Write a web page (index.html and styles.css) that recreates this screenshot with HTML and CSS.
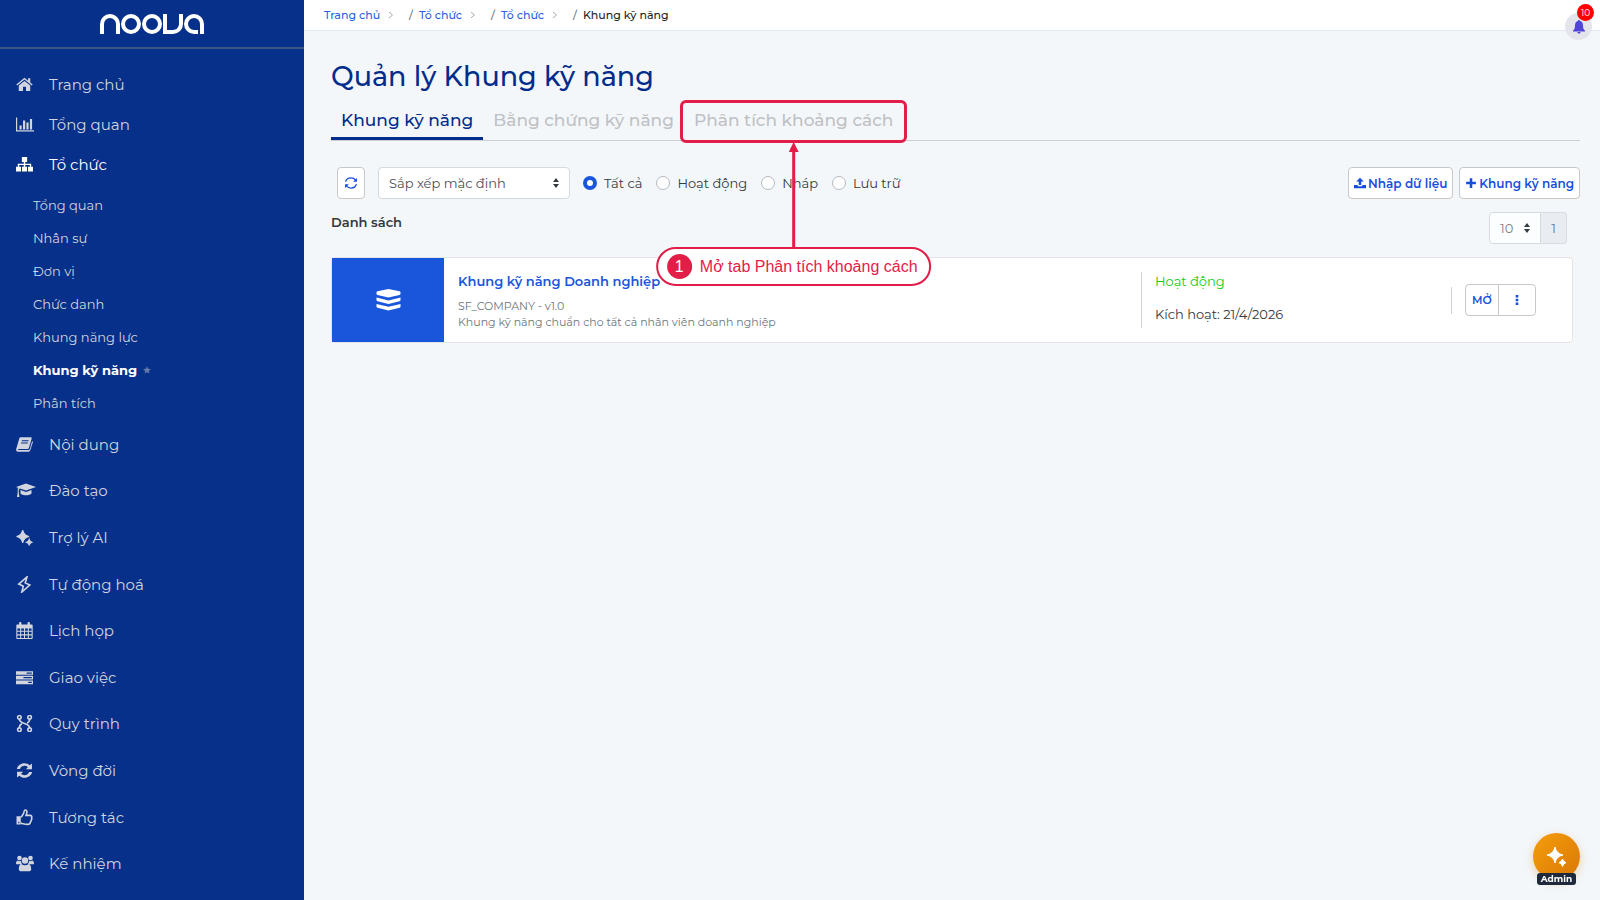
FILE: index.html
```
<!DOCTYPE html>
<html lang="vi">
<head>
  <meta charset="UTF-8">
  <meta name="viewport" content="width=device-width, initial-scale=1">
  <title>Quản lý Khung kỹ năng</title>
  <link rel="stylesheet" href="styles.css">
</head>
<body>

<aside class="sidebar">
  <a href="#" class="logo" aria-label="Noova">
    <span class="logo-n"></span><span class="logo-o"></span><span class="logo-o"></span><span class="logo-v"></span><span class="logo-a"></span>
  </a>

  <nav class="menu">
    <ul class="menu-top">
      <li><a href="#"><svg viewBox="0 0 16 16"><path d="M8 4.600 2.600 9v5.200h4v-4h2.800v4h4V9zM8 1.600.3 8l.9 1L8 3.400 14.800 9l.9-1-2.300-2V2.200h-2v2.200z"/></svg>Trang chủ</a></li>
      <li><a href="#"><svg class="wide" viewBox="0 0 18 16"><path d="M0 1h1.200v12.800H18V15H0zM3.500 9h2.200v4H3.500zM7 4h2.200v9H7zM10.400 6h2.200v7h-2.200zM13.900 2.600h2.200V13h-2.200z"/></svg>Tổng quan</a></li>
      <li><a href="#" class="open"><svg viewBox="0 0 16 16"><path d="M5.500 1h5v4.600H8.700v1.600h5.600V10H16v4.600h-4.700V10h1.700V8.500H8.700V10h1.700v4.600H5.600V10h1.700V8.500H3V10h1.700v4.600H0V10h1.700V7.200h5.600V5.600H5.500z"/></svg>Tổ chức</a></li>
    </ul>

    <ul class="submenu">
      <li><a href="#">Tổng quan</a></li>
      <li><a href="#">Nhân sự</a></li>
      <li><a href="#">Đơn vị</a></li>
      <li><a href="#">Chức danh</a></li>
      <li><a href="#">Khung năng lực</a></li>
      <li><a href="#" class="active">Khung kỹ năng<svg viewBox="0 0 16 16"><path d="m8 .5 2.300 5 5.400.6-4 3.700 1.100 5.400L8 12.500l-4.800 2.700 1.100-5.400-4-3.700 5.400-.6z"/></svg></a></li>
      <li><a href="#">Phân tích</a></li>
    </ul>

    <ul class="menu-main">
      <li><a href="#"><svg viewBox="0 0 16 16"><path fill-rule="evenodd" d="M4.700 1.200h9c.8 0 1.200.6 1 1.300l-2.600 8.700c-.2.600-.7 1-1.300 1H2.400c-.7 0-.6 1 .1 1h9.400c.5 0 .8-.2 1-.7l2.300-7.900c.6.400.8.9.6 1.500L13.400 13.500c-.2.800-.9 1.300-1.700 1.300H2C.7 14.800-.2 13.500.2 12.300L3 2.500c.2-.8.9-1.300 1.700-1.300zM5.600 4l-.3.900h6.400l.3-.9zM5 6.200l-.3.900h6.300l.3-.9z"/></svg>Nội dung</a></li>
      <li><a href="#"><svg class="cap" viewBox="0 0 20 16"><path d="M10 1 20 4.600 10 8 4 6 2.700 7.300V10l.8 4.400H1L1.700 10V6.300L2.500 5.400 0 4.600zM4.500 7.600 10 9.400l5.500-1.800V11c-1.500 2.400-9.500 2.400-11 0z"/></svg>Đào tạo</a></li>
      <li><a href="#"><svg viewBox="0 0 16 16"><path d="M6.300 1Q7.300 5.800 12.300 7 7.300 8 6.300 13 5.300 8 .5 7 5.300 5.800 6.300 1zM12.400 9.800q.6 2 2.600 2.600-2 .6-2.600 2.600-.6-2-2.600-2.600 2-.6 2.600-2.600z" stroke="currentColor"/></svg>Trợ lý AI</a></li>
      <li><a href="#"><svg viewBox="0 0 16 16"><path class="line" d="M10.400.8 2.600 7.600l4.300 2-1.500 5.600 7.600-6.700-4.300-2z"/></svg>Tự động hoá</a></li>
      <li><a href="#"><svg viewBox="0 0 16 16"><path fill-rule="evenodd" d="M1.300 2.400h1.600V1c0-1.200 2.200-1.200 2.200 0v1.400h5.800V1c0-1.200 2.200-1.200 2.200 0v1.400h1.600c.6 0 1 .4 1 1V15c0 .6-.4 1-1 1H1.300c-.6 0-1-.4-1-1V3.400c0-.6.4-1 1-1zM1.300 6v2.300h2.600V6zm3.600 0v2.300h2.600V6zm3.600 0v2.300h2.600V6zm3.600 0v2.300h2.600V6zM1.300 9.200v2.400h2.600V9.200zm3.600 0v2.400h2.600V9.200zm3.600 0v2.400h2.600V9.200zm3.600 0v2.400h2.600V9.200zM1.300 12.600V15h2.600v-2.400zm3.600 0V15h2.600v-2.400zm3.600 0V15h2.600v-2.400zm3.600 0V15h2.600v-2.400z"/></svg>Lịch họp</a></li>
      <li><a href="#"><svg viewBox="0 0 16 16"><path fill-rule="evenodd" d="M0 2h16v3.500H0zM10 3.200v1.200h4.900V3.200zM0 6.400h16v3.500H0zM7 7.600v1.200h7.900V7.600zM0 10.800h16v3.500H0zM11.500 12v1.200h3.400V12z"/></svg>Giao việc</a></li>
      <li><a href="#"><svg viewBox="0 0 16 16"><g class="line"><circle cx="3.200" cy="2.200" r="1.700"/><circle cx="12.800" cy="2.200" r="1.700"/><circle cx="3.200" cy="13.800" r="1.700"/><circle cx="12.800" cy="13.800" r="1.700"/><path d="M3.200 4c0 4.500 9.600 3.500 9.600 8M12.800 4c0 2-.8 3-2.400 3.500M3.200 12c0-2 .8-3 2.400-3.700"/></g></svg>Quy trình</a></li>
      <li><a href="#"><svg viewBox="0 0 16 16"><path d="M.8 6.600C1.600 3.300 4.500 1.200 8 1.200c1.900 0 3.600.7 4.900 1.900L15 1.300v5.600H9.300l1.900-2C9 2.700 5 3.100 3.700 6.600zM15.200 9.400c-.8 3.300-3.700 5.400-7.200 5.400-1.900 0-3.600-.7-4.900-1.900L1 14.700V9.100h5.700l-1.900 2c2.200 2.200 6.200 1.800 7.500-1.700z"/></svg>Vòng đời</a></li>
      <li><a href="#"><svg viewBox="0 0 16 16"><path class="line" d="M4.500 7.500C6 6.800 6.500 5 7.200 3.800 7.700 2.800 7.500 1 8.800 1c1.900 0 1.800 2.300.7 5h3.700c1.400 0 2 1.300 1.400 2.300.4.800.3 1.600-.3 2.200.1.800-.2 1.400-.8 1.800 0 1.400-.7 2.200-2.300 2.200-3 0-4.700-.7-6.700-1.200"/><path fill-rule="evenodd" d="M.5 6.800h4v7.800h-4zm1.600 5.300v1.300h1v-1.300z"/></svg>Tương tác</a></li>
      <li><a href="#"><svg class="wide" viewBox="0 0 18 16"><circle cx="3.500" cy="2.500" r="2.300"/><circle cx="14.500" cy="2.500" r="2.300"/><circle cx="9" cy="5" r="3.200"/><path d="M0 8.300C0 6.300.7 5 2 5c1 .8 2 .8 3 .3C5 7 5.500 8 6.300 8.800H1.200C.5 8.800 0 8.700 0 8.300zM18 8.300C18 6.300 17.300 5 16 5c-1 .8-2 .8-3 .3 0 1.700-.5 2.700-1.300 3.500h5.100c.7 0 1.200-.1 1.200-.5zM2.800 13.500c0-3 1-4.800 2.700-4.800 2 1.500 5 1.500 7 0 1.700 0 2.700 1.800 2.700 4.800 0 1.500-1 2.300-2.300 2.300H5.100c-1.300 0-2.300-.8-2.300-2.300z"/></svg>Kế nhiệm</a></li>
    </ul>
  </nav>
</aside>

<div class="page">
  <header class="topbar">
    <nav class="breadcrumb" aria-label="Breadcrumb">
      <a href="#">Trang chủ</a><svg viewBox="0 0 6 8"><path d="m1 1 3.500 3L1 7"/></svg><span class="slash">/</span>
      <a href="#">Tổ chức</a><svg viewBox="0 0 6 8"><path d="m1 1 3.500 3L1 7"/></svg><span class="slash">/</span>
      <a href="#">Tổ chức</a><svg viewBox="0 0 6 8"><path d="m1 1 3.500 3L1 7"/></svg><span class="slash">/</span>
      <span class="current">Khung kỹ năng</span>
    </nav>
    <button class="bell" type="button" aria-label="Thông báo">
      <svg viewBox="0 0 14 14"><path d="M7 0c.6 0 1 .4 1 1 2 .5 3 2 3 4.200 0 3 .6 4.300 2 5.300v1H1v-1c1.400-1 2-2.300 2-5.300C3 3 4 1.500 6 1c0-.6.400-1 1-1zM5.400 12h3.200c0 2-3.200 2-3.200 0z"/></svg>
      <span class="badge">10</span>
    </button>
  </header>

  <main>
    <h1>Quản lý Khung kỹ năng</h1>

    <div class="tabs">
      <a href="#" class="tab selected">Khung kỹ năng</a>
      <a href="#" class="tab">Bằng chứng kỹ năng</a>
      <div class="guide">
        <a href="#" class="tab">Phân tích khoảng cách</a>
        <div class="guide-frame"></div>
        <div class="guide-note">
          <span class="guide-arrow"></span>
          <p class="guide-label"><span>1</span>Mở tab Phân tích khoảng cách</p>
        </div>
      </div>
    </div>

    <form class="toolbar">
      <button type="button" class="btn refresh" aria-label="Tải lại"><svg viewBox="0 0 16 16"><path class="line" d="M1.800 6.500C2.600 4 5 2.200 8 2.200c2.200 0 4 .9 5.200 2.500M14.200 9.500C13.400 12 11 13.800 8 13.800c-2.200 0-4-.9-5.200-2.500"/><path d="M14.800 2.200v4.300h-4.300zM1.200 13.800V9.500h4.300z"/></svg></button>
      <div class="select sort">
        <select aria-label="Sắp xếp"><option>Sắp xếp mặc định</option></select>
        <svg viewBox="0 0 6 10"><path d="M3 0 6 4H0zM0 6h6l-3 4z"/></svg>
      </div>
      <label><input type="radio" name="status" checked>Tất cả</label>
      <label><input type="radio" name="status">Hoạt động</label>
      <label><input type="radio" name="status">Nháp</label>
      <label><input type="radio" name="status">Lưu trữ</label>
      <div class="actions">
        <button type="button" class="btn"><svg viewBox="0 0 16 16"><path d="m8 1 5 5H9.700v4.800H6.300V6H3zM0 10.500h5v1.800h6v-1.800h5V15H0z"/></svg>Nhập dữ liệu</button>
        <button type="button" class="btn"><svg viewBox="0 0 16 16"><path d="M6.300 1.500h3.400v4.800h4.800v3.400H9.700v4.800H6.300V9.700H1.500V6.300h4.800z"/></svg>Khung kỹ năng</button>
      </div>
    </form>

    <div class="list-head">
      <h2>Danh sách</h2>
      <div class="pager">
        <div class="select">
          <select aria-label="Số dòng"><option>10</option></select>
          <svg viewBox="0 0 6 10"><path d="M3 0 6 4H0zM0 6h6l-3 4z"/></svg>
        </div>
        <span class="page-no">1</span>
      </div>
    </div>

    <article class="card">
      <div class="card-icon">
        <svg viewBox="0 0 24 22"><path d="M12 0 23 2.200q1 .3 1 1V5q0 .7-1 1L12 8.500 1 6Q0 5.700 0 5V3.200q0-.7 1-1zM0 8.600l12 2.800 12-2.800v2.700q0 .7-1 1L12 15 1 12.300q-1-.3-1-1zM0 15l12 2.800L24 15v2.700q0 .7-1 1L12 21.400 1 18.700q-1-.3-1-1z"/></svg>
      </div>
      <div class="card-info">
        <h3><a href="#">Khung kỹ năng Doanh nghiệp</a></h3>
        <p>SF_COMPANY - v1.0</p>
        <p>Khung kỹ năng chuẩn cho tất cả nhân viên doanh nghiệp</p>
      </div>
      <div class="card-status">
        <p class="on">Hoạt động</p>
        <p>Kích hoạt: 21/4/2026</p>
      </div>
      <div class="card-actions">
        <button type="button">MỞ</button>
        <button type="button" aria-label="Thêm"><svg viewBox="0 0 4 10"><path d="M.7 0h2.600v2.500H.7zM.7 3.700h2.600v2.500H.7zM.7 7.400h2.600v2.500H.7z"/></svg></button>
      </div>
    </article>
  </main>
</div>

<button class="assistant" type="button">
  <svg viewBox="0 0 20 20"><path d="M8 0Q9.200 6.600 16 8 9.200 9.400 8 16 6.800 9.400 0 8 6.800 6.600 8 0zM15.500 12q.7 2.800 3.500 3.700-2.800.8-3.500 3.700-.7-2.900-3.500-3.700 2.800-.9 3.500-3.700z" stroke="currentColor"/></svg>
  <span>Admin</span>
</button>

</body>
</html>
```

FILE: styles.css
```
* {
  margin: 0;
  padding: 0;
  box-sizing: border-box;
}

body {
  display: flex;
  min-height: 100vh;
  background: #f3f7fa;
  color: #343a40;
  font-family: Montserrat, Inter, sans-serif;
  font-size: 13px;
}

a {
  color: inherit;
  text-decoration: none;
}

ul {
  list-style: none;
}

svg {
  display: block;
  flex: none;
  fill: currentColor;
}

.line {
  fill: none;
  stroke: currentColor;
  stroke-width: 1.5;
}

button,
select {
  font-family: inherit;
  cursor: pointer;
}

/* Sidebar */
.sidebar {
  display: flex;
  flex-direction: column;
  flex: none;
  width: 304px;
  min-height: 100vh;
  background: #07308b;
  color: #d2d5de;
}

.logo {
  display: flex;
  justify-content: center;
  gap: 1px;
  height: 49px;
  padding-top: 14px;
  border-bottom: 2px solid #3d5583;
}

.logo span {
  width: 20px;
  height: 20px;
  border: 4px solid #fff;
}

.logo .logo-n {
  border-bottom: none;
  border-radius: 10px 10px 0 0;
}

.logo .logo-o {
  border-radius: 50%;
}

.logo .logo-v {
  border-top: none;
  border-radius: 0 0 10px 0;
}

.logo .logo-a {
  position: relative;
  border-radius: 10px 10px 0 10px;
}

.logo-a::after {
  content: "";
  position: absolute;
  right: 0;
  bottom: -4px;
  width: 2px;
  height: 4px;
  background: #07308b;
}

.menu {
  display: flex;
  flex-direction: column;
  flex: 1;
  padding: 15px 0 13px;
}

.menu a {
  display: flex;
  align-items: center;
  height: 100%;
}

.menu-top a,
.menu-main a {
  padding-left: 16px;
  font-size: 15px;
}

.menu-top li {
  height: 40px;
}

.menu-top svg,
.menu-main svg {
  width: 17px;
  height: 17px;
  margin-right: 16px;
}

.menu-top .wide,
.menu-main .wide {
  width: 18px;
  margin-right: 15px;
}

.menu-main .cap {
  width: 20px;
  margin-right: 13px;
}

.menu .open,
.menu .active {
  color: #fff;
}

.submenu {
  padding: 4px 0 2px;
}

.submenu li {
  height: 33px;
}

.submenu a {
  padding-left: 33px;
  font-size: 13px;
}

.submenu .active {
  font-weight: 700;
}

.submenu svg {
  width: 8px;
  height: 8px;
  margin-left: 6px;
  color: #6279ab;
}

.menu-main {
  display: grid;
  flex: 1;
  grid-auto-rows: 1fr;
}

/* Top bar */
.page {
  flex: 1;
  min-width: 0;
}

.topbar {
  display: flex;
  justify-content: space-between;
  height: 31px;
  padding: 0 8px 0 20px;
  background: #fff;
  border-bottom: 1px solid #e3e9ee;
}

.breadcrumb {
  display: flex;
  align-items: center;
  padding-bottom: 1px;
  font-size: 11px;
  font-weight: 500;
}

.breadcrumb a {
  color: #2c5fe0;
}

.breadcrumb svg {
  width: 6px;
  height: 8px;
  margin: 0 15px 0 8px;
  fill: none;
  stroke: #a3aab5;
}

.slash {
  margin-right: 6px;
  color: #6c757d;
}

.current {
  color: #212529;
}

.bell {
  position: relative;
  display: flex;
  align-items: center;
  justify-content: center;
  width: 27px;
  height: 27px;
  margin-top: 13px;
  background: #e3e5eb;
  border: none;
  border-radius: 50%;
  color: #5046d8;
}

.bell svg {
  width: 14px;
  height: 14px;
}

.badge {
  position: absolute;
  top: -9px;
  right: -2px;
  width: 17px;
  height: 17px;
  border-radius: 50%;
  background: #f00;
  color: #fff;
  font-size: 9px;
  line-height: 17px;
}

/* Content */
main {
  padding: 28px 20px 20px 27px;
}

h1 {
  color: #022c8c;
  font-size: 27px;
  font-weight: 500;
  line-height: 36px;
}

.tabs {
  display: flex;
  height: 46px;
  border-bottom: 1px solid #cbd0d8;
}

.tab {
  display: block;
  height: 45px;
  padding: 0 10px;
  color: #bfc1c4;
  font-size: 17px;
  font-weight: 500;
  line-height: 50px;
}

.tab.selected {
  border-bottom: 3px solid #022c8c;
  color: #022c8c;
}

/* Guide: frame round the tab, with an arrow and a note under it */
.guide {
  position: relative;
}

.guide-frame {
  position: absolute;
  inset: 5px -4px -3px;
  border: 3px solid #e11d48;
  border-radius: 6px;
}

.guide-note {
  position: absolute;
  top: 47px;
  left: 50%;
  display: flex;
  flex-direction: column;
  align-items: center;
  transform: translateX(-50%);
}

.guide-arrow {
  width: 10px;
  height: 105px;
  background: #e11d48;
  clip-path: polygon(50% 0, 100% 10px, 65% 10px, 65% 100%, 35% 100%, 35% 10px, 0 10px);
}

.guide-label {
  display: flex;
  align-items: center;
  gap: 8px;
  height: 39px;
  padding: 0 12px 0 9px;
  background: #fff;
  border: 2px solid #e11d48;
  border-radius: 20px;
  color: #e11d48;
  font-family: "Liberation Sans", sans-serif;
  font-size: 16px;
  white-space: nowrap;
}

.guide-label span {
  width: 25px;
  height: 25px;
  border-radius: 50%;
  background: #e11d48;
  color: #fff;
  line-height: 25px;
  text-align: center;
}

.toolbar {
  display: flex;
  align-items: center;
  padding: 26px 0 0 6px;
}

.btn {
  display: flex;
  align-items: center;
  justify-content: center;
  gap: 2px;
  height: 32px;
  padding: 0 5px;
  background: #fff;
  border: 1px solid #c6c8ca;
  border-radius: 4px;
  color: #174fdc;
  font-size: 12px;
  font-weight: 600;
}

.btn svg {
  width: 12px;
  height: 12px;
}

.refresh {
  width: 28px;
  margin-right: 13px;
}

.refresh svg {
  width: 14px;
  height: 14px;
}

.select {
  position: relative;
  height: 32px;
  color: #495057;
}

.select select {
  width: 100%;
  height: 100%;
  padding: 0 10px;
  appearance: none;
  background: #fff;
  border: 1px solid #d5dae0;
  border-radius: 4px;
  color: inherit;
  font-size: 13px;
}

.select svg {
  position: absolute;
  top: 11px;
  right: 11px;
  width: 6px;
  height: 10px;
  color: #343a40;
  pointer-events: none;
}

.sort {
  width: 192px;
  margin-right: 13px;
}

.toolbar label {
  display: flex;
  align-items: center;
  gap: 7px;
  margin-right: 14px;
}

.toolbar input {
  width: 14px;
  height: 14px;
  appearance: none;
  background: #fff;
  border: 1px solid #b3bac2;
  border-radius: 50%;
}

.toolbar input:checked {
  border: 4px solid #1a56db;
}

.actions {
  display: flex;
  gap: 6px;
  margin-left: auto;
}

.list-head {
  display: flex;
  justify-content: space-between;
  padding: 13px 13px 0 0;
}

h2 {
  font-size: 13px;
  font-weight: 600;
  line-height: 20px;
}

.pager {
  display: flex;
  color: #6c757d;
}

.pager .select {
  width: 52px;
}

.pager select {
  background: #fcfdfe;
  border-radius: 4px 0 0 4px;
  color: #7b8188;
}

.page-no {
  width: 26px;
  background: #e9edf2;
  border: 1px solid #d9dee4;
  border-left: none;
  border-radius: 0 4px 4px 0;
  line-height: 30px;
  text-align: center;
}

.card {
  display: flex;
  align-items: center;
  margin: 13px 7px 0 0;
  background: #fff;
  border: 1px solid #e2e4e7;
  border-radius: 4px;
}

.card-icon {
  display: flex;
  align-items: center;
  justify-content: center;
  align-self: stretch;
  width: 112px;
  background: #1a56db;
  color: #fff;
}

.card-icon svg {
  width: 25px;
  height: 22px;
}

.card-info {
  flex: 1;
  padding: 15px 14px 12px;
}

.card-info h3 {
  margin-bottom: 9px;
  color: #1a56db;
  font-size: 13px;
  font-weight: 600;
  line-height: 16px;
}

.card-info p {
  color: #6c757d;
  font-size: 11px;
  line-height: 16px;
}

.card-status {
  display: grid;
  gap: 14px;
  width: 310px;
  padding: 0 0 4px 13px;
  border-left: 1px solid #ced2dc;
  line-height: 19px;
}

.on {
  color: #0fcc21;
}

.card-actions {
  display: flex;
  align-items: center;
  margin-right: 36px;
}

.card-actions::before {
  content: "";
  height: 27px;
  margin-right: 13px;
  border-left: 1px solid #ced2dc;
}

.card-actions button {
  display: flex;
  align-items: center;
  justify-content: center;
  width: 34px;
  height: 32px;
  background: #fff;
  border: 1px solid #c6c8ca;
  border-radius: 4px 0 0 4px;
  color: #174fdc;
  font-size: 11px;
  font-weight: 600;
}

.card-actions button + button {
  width: 38px;
  margin-left: -1px;
  border-radius: 0 4px 4px 0;
}

.card-actions svg {
  width: 4px;
  height: 10px;
}

/* Floating assistant button */
.assistant {
  position: fixed;
  right: 20px;
  bottom: 20px;
  display: flex;
  align-items: center;
  justify-content: center;
  width: 47px;
  height: 47px;
  background: linear-gradient(135deg, #f59e0b, #d97706);
  border: none;
  border-radius: 50%;
  box-shadow: 0 3px 10px rgba(217, 119, 6, 0.3);
  color: #fff;
}

.assistant svg {
  width: 20px;
  height: 20px;
}

.assistant span {
  position: absolute;
  bottom: -5px;
  width: 39px;
  border-radius: 3px;
  background: #1e293b;
  font-size: 9px;
  font-weight: 700;
  line-height: 12px;
}
```
